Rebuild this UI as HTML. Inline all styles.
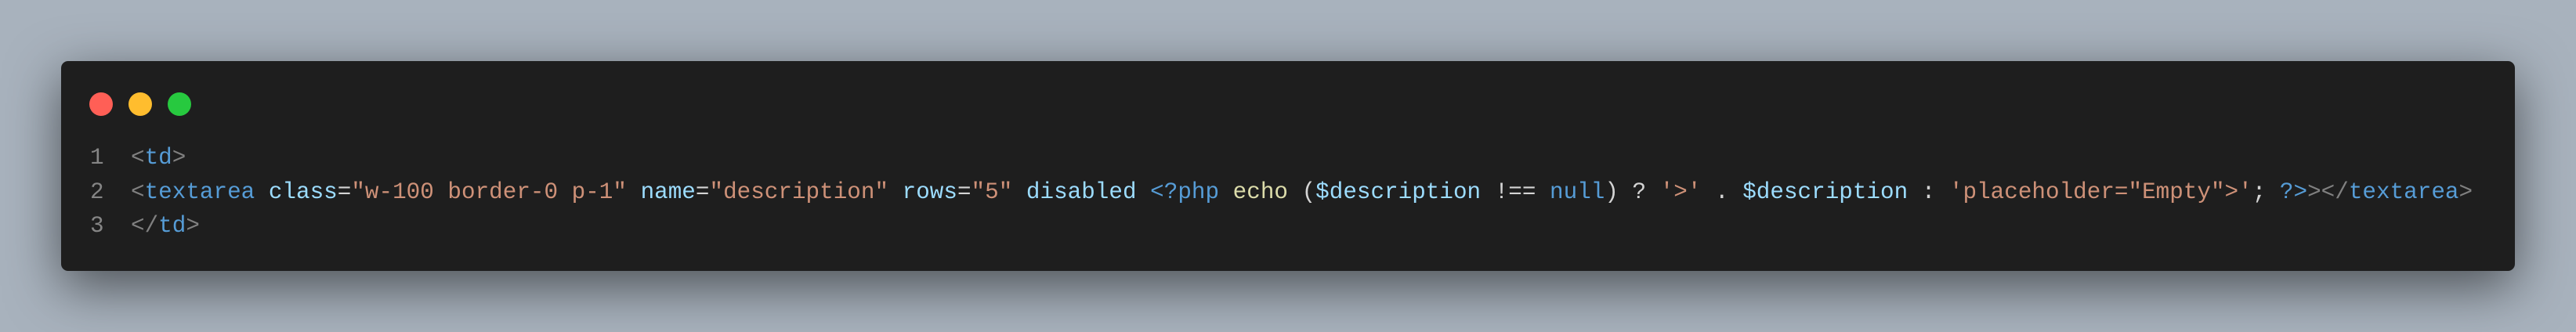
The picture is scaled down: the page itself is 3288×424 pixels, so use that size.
<!DOCTYPE html>
<html><head><meta charset="utf-8"><style>
html,body{margin:0;padding:0}
body{width:3288px;height:424px;background:#a8b2bd;position:relative;overflow:hidden}
.win{position:absolute;left:78px;top:78px;width:3132px;height:268px;background:#1e1e1e;border-radius:9px;box-shadow:0 20px 68px rgba(0,0,0,0.55)}
.dot{position:absolute;top:118px;width:30px;height:30px;border-radius:50%}
.ln,.tx{position:absolute;top:180px;font-family:"Liberation Mono",monospace;font-size:29.3px;line-height:43.5px;white-space:pre;color:#d4d4d4}
.ln{left:115px;color:#858585}
.tx{left:167px}
.g{color:#808080}.b{color:#569cd6}.a{color:#9cdcfe}.s{color:#ce9178}.y{color:#dcdcaa}
</style></head><body>
<div class="win"></div>
<div class="dot" style="left:114px;background:#ff5f56"></div>
<div class="dot" style="left:164px;background:#ffbd2e"></div>
<div class="dot" style="left:214px;background:#27c93f"></div>
<div class="ln">1
2
3</div>
<div class="tx"><span class="g">&lt;</span><span class="b">td</span><span class="g">&gt;</span>
<span class="g">&lt;</span><span class="b">textarea</span> <span class="a">class</span>=<span class="s">"w-100 border-0 p-1"</span> <span class="a">name</span>=<span class="s">"description"</span> <span class="a">rows</span>=<span class="s">"5"</span> <span class="a">disabled</span> <span class="b">&lt;?php</span> <span class="y">echo</span> (<span class="a">$description</span> !== <span class="b">null</span>) ? <span class="s">'&gt;'</span> . <span class="a">$description</span> : <span class="s">'placeholder="Empty"&gt;'</span>; <span class="b">?&gt;</span><span class="g">&gt;&lt;/</span><span class="b">textarea</span><span class="g">&gt;</span>
<span class="g">&lt;/</span><span class="b">td</span><span class="g">&gt;</span></div>
</body></html>
